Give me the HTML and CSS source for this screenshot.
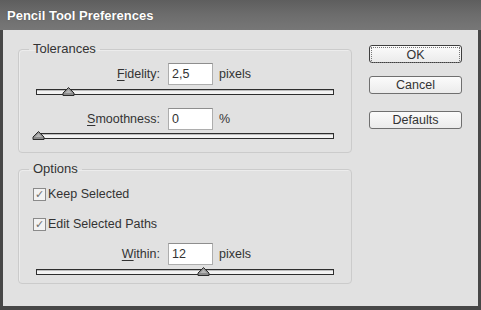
FILE: index.html
```html
<!DOCTYPE html>
<html lang="en">
<head>
  <meta charset="UTF-8">
  <title>Pencil Tool Preferences</title>
  <link rel="stylesheet" href="styles.css">
</head>
<body>
  <div class="janela">
    <div class="titulo">Pencil Tool Preferences</div>
    <div class="conteudo">
      <div class="coluna-esq">
        <fieldset class="grupo grupo-tol">
          <legend>Tolerances</legend>
          <div class="linha linha-1">
            <label class="rotulo"><u>F</u>idelity:</label>
            <input class="campo" type="text" value="2,5">
            <span class="unidade">pixels</span>
          </div>
          <div class="slider slider-1">
            <svg class="thumb" style="left:25px" width="13" height="9" viewBox="0 0 13 9"><path d="M1 8.5 L1 6 L6.5 0.5 L12 6 L12 8.5 Z" fill="#8c8c8c" stroke="#2a2a2a"/><path d="M3 6 L6.5 2.5 L10 6 Z" fill="#b5b5b5"/></svg>
          </div>
          <div class="linha linha-2">
            <label class="rotulo"><u>S</u>moothness:</label>
            <input class="campo" type="text" value="0">
            <span class="unidade">%</span>
          </div>
          <div class="slider slider-2">
            <svg class="thumb" style="left:-5px" width="13" height="9" viewBox="0 0 13 9"><path d="M1 8.5 L1 6 L6.5 0.5 L12 6 L12 8.5 Z" fill="#8c8c8c" stroke="#2a2a2a"/><path d="M3 6 L6.5 2.5 L10 6 Z" fill="#b5b5b5"/></svg>
          </div>
        </fieldset>

        <fieldset class="grupo grupo-opc">
          <legend>Options</legend>
          <div class="check check-1"><span class="caixa">&#10003;</span>Keep Selected</div>
          <div class="check check-2"><span class="caixa">&#10003;</span>Edit Selected Paths</div>
          <div class="linha linha-3">
            <label class="rotulo"><u>W</u>ithin:</label>
            <input class="campo" type="text" value="12">
            <span class="unidade">pixels</span>
          </div>
          <div class="slider slider-3">
            <svg class="thumb" style="left:160px" width="13" height="9" viewBox="0 0 13 9"><path d="M1 8.5 L1 6 L6.5 0.5 L12 6 L12 8.5 Z" fill="#8c8c8c" stroke="#2a2a2a"/><path d="M3 6 L6.5 2.5 L10 6 Z" fill="#b5b5b5"/></svg>
          </div>
        </fieldset>
      </div>

      <div class="coluna-dir">
        <button class="botao" id="ok"><span>OK</span></button>
        <button class="botao" id="cancelar">Cancel</button>
        <button class="botao" id="padrao">Defaults</button>
      </div>
    </div>
  </div>
</body>
</html>
```

FILE: styles.css
```css
body {
  margin: 0;
  font-family: "Liberation Sans", Arial, sans-serif;
  font-size: 12px;
  color: #333;
}

.janela {
  width: 481px;
  height: 310px;
  box-sizing: border-box;
  background: #474747;
  display: flex;
  flex-direction: column;
}

.titulo {
  height: 30px;
  line-height: 31px;
  padding-left: 7px;
  background: linear-gradient(#5e5e5e, #6d6d6d 50%, #777);
  color: #fff;
  font-weight: bold;
  font-size: 13px;
  text-shadow: 0 0 1px #444;
}

.conteudo {
  flex: 1;
  margin: 0 3px 4px 3px;
  background: #e1e1e1;
  display: flex;
}

.coluna-esq {
  margin-left: 15px;
  width: 334px;
}

.grupo {
  margin: 0;
  padding: 0;
  border: 1px solid #cbcbcb;
  border-radius: 4px;
  box-shadow: inset 1px 1px 0 #ececec;
}

.grupo legend {
  margin-left: 10px;
  padding: 0 4px;
  font-size: 13px;
  line-height: 14px;
  color: #333;
}

.grupo-tol {
  margin-top: 12px;
  padding-bottom: 13px;
}

.grupo-opc {
  margin-top: 9px;
  padding-bottom: 8px;
}

.linha {
  display: flex;
  align-items: center;
  height: 22px;
}

.linha-1 { margin-top: 7px; }
.linha-2 { margin-top: 13px; }
.linha-3 { margin-top: 10px; }

.rotulo {
  width: 141px;
  text-align: right;
  font-size: 12.5px;
}

.rotulo u {
  text-decoration-thickness: 1px;
  text-underline-offset: 2px;
}

.campo {
  margin-left: 8px;
  width: 45px;
  height: 22px;
  box-sizing: border-box;
  border: 1px solid #adadad;
  border-top-color: #8e8e8e;
  background: #fff;
  padding: 0 0 0 3px;
  font-family: "Liberation Sans", Arial, sans-serif;
  font-size: 12.5px;
  color: #333;
}

.unidade {
  margin-left: 6px;
  font-size: 12.5px;
}

.slider {
  position: relative;
  margin-left: 17px;
  width: 298px;
  height: 6px;
  box-sizing: border-box;
  border: 1px solid #2e2e2e;
  background: #f3f3f3;
  box-shadow: inset 0 1px 0 #bdbdbd;
}

.slider-1 { margin-top: 4px; }
.slider-2 { margin-top: 3px; }
.slider-3 { margin-top: 4px; }

.thumb {
  position: absolute;
  top: -3px;
}

.check {
  display: flex;
  align-items: center;
  height: 18px;
  margin-left: 14px;
  font-size: 12.5px;
}

.check-1 { margin-top: 9px; }
.check-2 { margin-top: 12px; }

.caixa {
  width: 13px;
  height: 13px;
  box-sizing: border-box;
  border: 1px solid #8a8a8a;
  background: #f2f2f2;
  color: #707070;
  font-size: 11px;
  line-height: 11px;
  text-align: center;
  margin-right: 2px;
  font-family: "DejaVu Sans", sans-serif;
}

.coluna-dir {
  margin-left: 17px;
  display: flex;
  flex-direction: column;
}

.botao {
  width: 93px;
  height: 18px;
  padding: 0;
  border: 1px solid #6f6f6f;
  border-radius: 3px;
  background: linear-gradient(#fbfbfb, #ebebeb);
  font-family: "Liberation Sans", Arial, sans-serif;
  font-size: 12.5px;
  color: #333;
  line-height: 16px;
}

#ok {
  margin-top: 15px;
  border-color: #3e3e3e;
  padding: 1px;
}

#ok span {
  display: block;
  height: 14px;
  line-height: 14px;
  border: 1px dotted #777;
}

#cancelar { margin-top: 13px; }
#padrao { margin-top: 17px; }
```
